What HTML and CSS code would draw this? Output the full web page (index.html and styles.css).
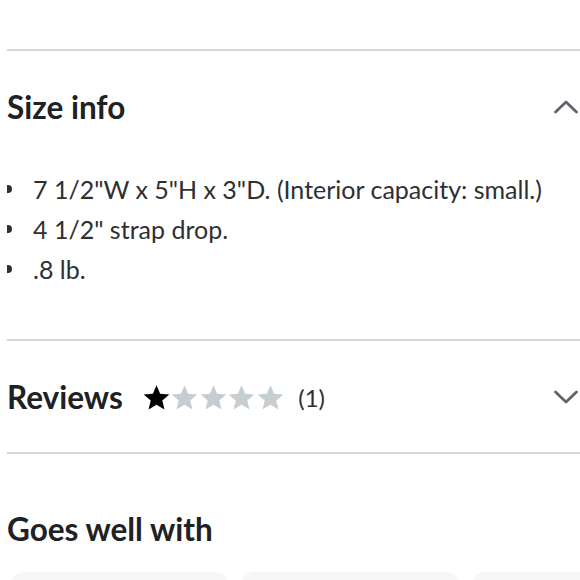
FILE: index.html
```html
<!DOCTYPE html>
<html>
<head>
<meta charset="utf-8">
<link rel="stylesheet" href="styles.css">
</head>
<body>
<div class="page">
  <section class="panel panel-size">
    <div class="panel-head">
      <h2 class="title">Size info</h2>
      <svg class="chev" width="26" height="16" viewBox="0 0 26 16"><path d="M2.5 13 L13 3 L23.5 13" fill="none" stroke="#5f656b" stroke-width="2.8" stroke-linecap="round" stroke-linejoin="round"/></svg>
    </div>
    <ul class="list">
      <li>7 1/2"W x 5"H x 3"D. (Interior capacity: small.)</li>
      <li>4 1/2" strap drop.</li>
      <li>.8 lb.</li>
    </ul>
  </section>
  <section class="panel panel-reviews">
    <div class="panel-head">
      <div class="rev-left">
        <h2 class="title">Reviews</h2>
        <div class="stars">
          <svg class="star on" viewBox="0 0 24 24"><path d="M12 1.8l3 7.1 7.6.6-5.8 5 1.8 7.5L12 18l-6.6 4 1.8-7.5-5.8-5 7.6-.6z"/></svg>
          <svg class="star" viewBox="0 0 24 24"><path d="M12 1.8l3 7.1 7.6.6-5.8 5 1.8 7.5L12 18l-6.6 4 1.8-7.5-5.8-5 7.6-.6z"/></svg>
          <svg class="star" viewBox="0 0 24 24"><path d="M12 1.8l3 7.1 7.6.6-5.8 5 1.8 7.5L12 18l-6.6 4 1.8-7.5-5.8-5 7.6-.6z"/></svg>
          <svg class="star" viewBox="0 0 24 24"><path d="M12 1.8l3 7.1 7.6.6-5.8 5 1.8 7.5L12 18l-6.6 4 1.8-7.5-5.8-5 7.6-.6z"/></svg>
          <svg class="star" viewBox="0 0 24 24"><path d="M12 1.8l3 7.1 7.6.6-5.8 5 1.8 7.5L12 18l-6.6 4 1.8-7.5-5.8-5 7.6-.6z"/></svg>
        </div>
        <span class="count">(1)</span>
      </div>
      <svg class="chev" width="26" height="16" viewBox="0 0 26 16"><path d="M2.5 3 L13 13 L23.5 3" fill="none" stroke="#5f656b" stroke-width="2.8" stroke-linecap="round" stroke-linejoin="round"/></svg>
    </div>
  </section>
  <section class="panel panel-goes">
    <h2 class="title">Goes well with</h2>
    <div class="cards">
      <div class="card"></div>
      <div class="card"></div>
      <div class="card"></div>
    </div>
  </section>
</div>
</body>
</html>
```
FILE: styles.css
```css
html, body {
  margin: 0;
  padding: 0;
  background: #ffffff;
}
body {
  font-family: Lato, "Open Sans", sans-serif;
  color: #2e2f32;
}
.page {
  height: 580px;
  overflow: hidden;
  padding-top: 49px;
  padding-left: 7px;
  box-sizing: border-box;
}
.panel {
  border-top: 2px solid #d5d8da;
}
.panel-head {
  display: flex;
  align-items: center;
  justify-content: space-between;
}
.title {
  margin: 0;
  font-size: 31.5px;
  line-height: 34px;
  font-weight: 700;
  color: #202124;
}
.chev {
  display: block;
  margin-right: 1px;
}
.panel-size .panel-head {
  padding-top: 39px;
}
.list {
  list-style: none;
  margin: 45px 0 0 0;
  padding: 0 0 50px 0;
}
.list li {
  position: relative;
  padding-left: 26px;
  font-size: 25px;
  line-height: 40px;
  color: #2e2f32;
}
.list li::before {
  content: "";
  position: absolute;
  left: 0;
  top: 16px;
  width: 5px;
  height: 8px;
  background: #2e2f32;
  border-radius: 0 4px 4px 0;
}
.panel-reviews .panel-head {
  padding-top: 39px;
  padding-bottom: 38px;
}
.rev-left {
  display: flex;
  align-items: center;
}
.stars {
  display: flex;
  margin-left: 19px;
}
.star {
  width: 29px;
  height: 29px;
  fill: #c6cdd0;
  margin-right: -0.5px;
}
.star.on {
  fill: #000000;
}
.count {
  margin-left: 14px;
  font-size: 24px;
  color: #2e2f32;
}
.panel-goes .title {
  margin-top: 58px;
}
.cards {
  display: flex;
  gap: 12px;
  margin-top: 26px;
  padding-left: 3px;
  overflow: hidden;
}
.card {
  flex: 0 0 219px;
  height: 40px;
  background: #f6f6f6;
  border-radius: 14px;
}
```
